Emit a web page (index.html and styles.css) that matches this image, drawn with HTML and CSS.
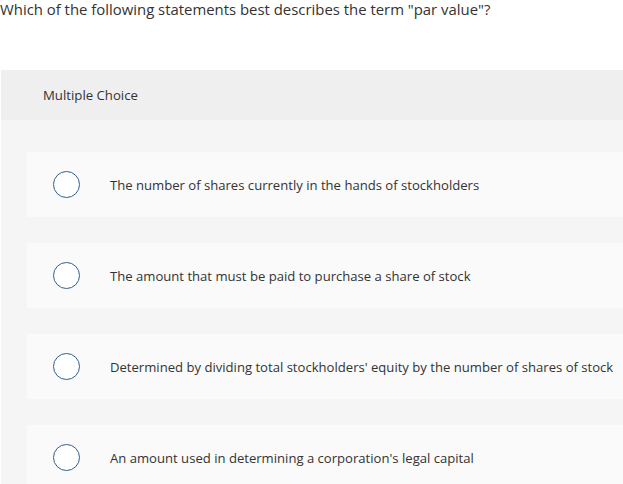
FILE: index.html
```html
<!DOCTYPE html>
<html lang="en">
<head>
  <meta charset="UTF-8">
  <title>Multiple Choice</title>
  <link rel="stylesheet" href="styles.css">
</head>
<body>
  <p class="question">Which of the following statements best describes the term "par value"?</p>

  <div class="panel">
    <div class="panel-head">Multiple Choice</div>
    <div class="panel-body">
      <div class="option"><span class="radio"></span><span>The number of shares currently in the hands of stockholders</span></div>
      <div class="option"><span class="radio"></span><span>The amount that must be paid to purchase a share of stock</span></div>
      <div class="option"><span class="radio"></span><span>Determined by dividing total stockholders' equity by the number of shares of stock</span></div>
      <div class="option"><span class="radio"></span><span>An amount used in determining a corporation's legal capital</span></div>
    </div>
  </div>
</body>
</html>
```

FILE: styles.css
```css
body { margin: 0; font-family: "Open Sans", "Liberation Sans", sans-serif; color: #333; background: #fff; overflow: hidden; }
.question { margin: 0; font-size: 14.9px; line-height: 18px; }
.panel { margin: 52px 0 0 1px; }
.panel-head {
  background: #efefef;
  height: 50px;
  padding-left: 42px;
  display: flex;
  align-items: center;
  font-size: 13.2px;
}
.panel-body {
  background: #f5f5f5;
  padding: 32px 0 0 26px;
  display: flex;
  flex-direction: column;
  gap: 26px;
}
.option {
  background: #fafafa;
  height: 65px;
  display: flex;
  align-items: center;
  font-size: 13.1px;
  white-space: nowrap;
}
.radio {
  width: 25px;
  height: 25px;
  border: 1.5px solid #2f5f8f;
  border-radius: 50%;
  background: #fff;
  margin: 0 30px 0 26px;
  flex: none;
}
```
